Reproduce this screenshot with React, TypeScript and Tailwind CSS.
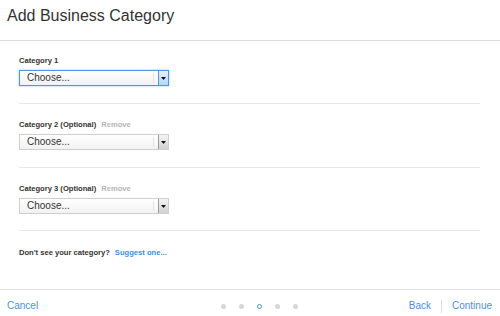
import React from 'react';

const font = { fontFamily: '"Liberation Sans", Arial, sans-serif' };

function FakeSelect({ focused }: { focused?: boolean }) {
  return (
    <div
      className={
        'relative flex h-[16px] w-[150px] items-stretch border bg-gradient-to-b from-white to-[#f2f2f2] ' +
        (focused ? 'border-[#4f96e8] shadow-[0_0_2px_rgba(79,150,232,0.6)]' : 'border-[#cfcfcf]')
      }
    >
      <div className="flex flex-1 items-center pl-[7px] text-[10px] leading-[12px] text-[#333]">Choose...</div>
      <div className="my-[2px] mr-[4px] w-px bg-[#e4e4e4]" />
      <div
        className={
          'flex w-[10px] items-center justify-center border-l ' +
          (focused
            ? 'border-[#4f96e8] bg-gradient-to-b from-[#e4f0fc] to-[#b9d6f5]'
            : 'border-[#9a9a9a] bg-gradient-to-b from-[#f4f4f4] to-[#d2d2d2]')
        }
      >
        <svg width="5" height="3" viewBox="0 0 5 3">
          <path d="M0 0 L5 0 L2.5 3 Z" fill="#111" />
        </svg>
      </div>
    </div>
  );
}

function Section({
  label,
  optional,
  focused,
  spacing,
}: {
  label: string;
  optional?: boolean;
  focused?: boolean;
  spacing: string;
}) {
  return (
    <div className={'border-b border-[#e8e8e8] ' + spacing}>
      <div className="flex items-center gap-[5px] text-[7.6px] leading-[10px]">
        <span className="font-bold text-[#333]">{label}</span>
        {optional && <span className="font-bold text-[#b5b5b5]">Remove</span>}
      </div>
      <div className="mt-[4px]">
        <FakeSelect focused={focused} />
      </div>
    </div>
  );
}

export default function App() {
  const dots = [0, 1, 2, 3, 4];

  return (
    <div className="flex h-[316px] w-[500px] flex-col bg-white" style={font}>
      {/* Titre */}
      <div className="h-[41px] shrink-0 border-b border-[#dcdcdc] pl-[7px] pt-[6px]">
        <h1 className="text-[16px] leading-[20px] text-[#333]">Add Business Category</h1>
      </div>

      {/* Catégories */}
      <div className="flex-1 pl-[19px] pr-[20px]">
        <Section label="Category 1" focused spacing="pt-[15px] pb-[17px]" />
        <Section label="Category 2 (Optional)" optional spacing="pt-[16px] pb-[17px]" />
        <Section label="Category 3 (Optional)" optional spacing="pt-[16px] pb-[16px]" />
        <div className="pt-[17px] text-[7.6px] leading-[10px]">
          <span className="font-bold text-[#333]">Don't see your category?</span>
          <span className="ml-[5px] font-bold text-[#3d8ee6]">Suggest one...</span>
        </div>
      </div>

      {/* Pied */}
      <div className="flex h-[27px] shrink-0 items-center border-t border-[#e2e2e2] pt-[6px] text-[10px] leading-[12px]">
        <span className="ml-[7px] text-[#4a90e2]">Cancel</span>
        <div className="ml-[183px] flex items-center gap-[13px]">
          {dots.map((d) =>
            d === 2 ? (
              <span key={d} className="h-[5px] w-[5px] rounded-full border border-[#4a90e2]" />
            ) : (
              <span key={d} className="h-[5px] w-[5px] rounded-full bg-[#d6d6d6]" />
            )
          )}
        </div>
        <div className="ml-auto mr-[8px] flex items-center">
          <span className="text-[#4a90e2]">Back</span>
          <span className="mx-[10px] h-[13px] w-px bg-[#dcdcdc]" />
          <span className="text-[#4a90e2]">Continue</span>
        </div>
      </div>
    </div>
  );
}
